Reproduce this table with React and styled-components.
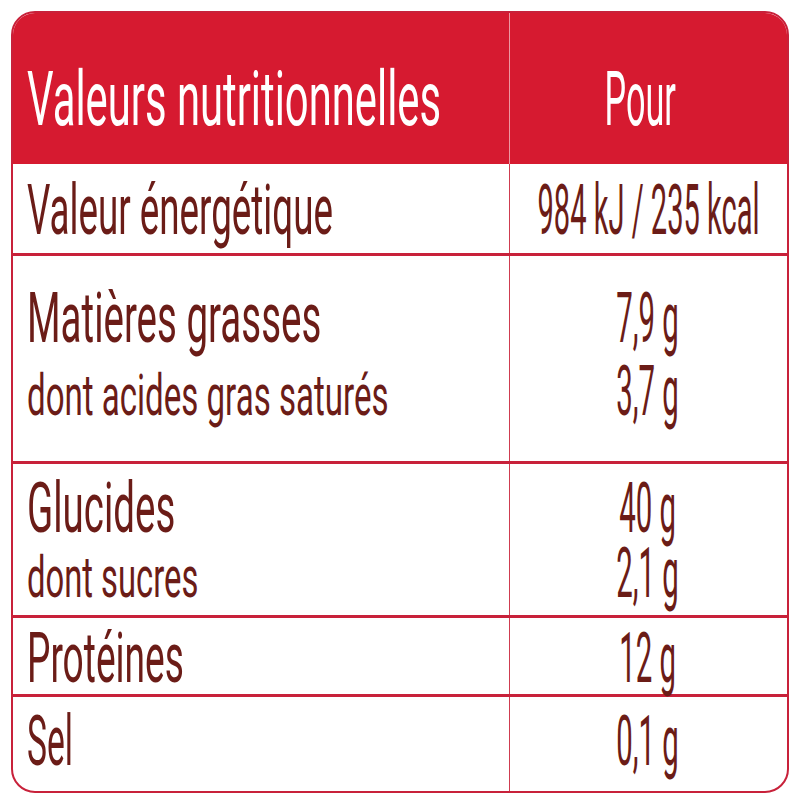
import React from "react";
import styled, { createGlobalStyle } from "styled-components";

const RED = "#d61a30";
const RULE = "#c8213a";
const BROWN = "#6b1c17";
const COL = 496;

const Global = createGlobalStyle`
  html, body {
    margin: 0;
    background: #ffffff;
  }
  body {
    font-family: Roboto, "Liberation Sans", Arial, sans-serif;
  }
`;

const Page = styled.div`
  width: 800px;
  height: 800px;
  box-sizing: border-box;
  padding: 11px;
`;

const Table = styled.div`
  width: 778px;
  height: 782px;
  box-sizing: border-box;
  border: 2px solid ${RULE};
  border-radius: 24px;
  overflow: hidden;
  display: grid;
  grid-template-rows: 151px 92px 208px 154px 79px 1fr;
`;

const Section = styled.div`
  box-sizing: border-box;
  display: flex;
  flex-direction: column;
  padding-top: ${(p) => p.$top}px;
  border-bottom: ${(p) => (p.$last ? "none" : `3px solid ${RULE}`)};
  background: linear-gradient(
    to right,
    transparent ${COL}px,
    #cf3c50 ${COL}px,
    #cf3c50 ${COL + 1}px,
    transparent ${COL + 1}px
  );
`;

const Head = styled(Section)`
  border-bottom: none;
  background: linear-gradient(
      to right,
      transparent ${COL}px,
      rgba(255, 255, 255, 0.55) ${COL}px,
      rgba(255, 255, 255, 0.55) ${COL + 1}px,
      transparent ${COL + 1}px
    ),
    ${RED};
  color: #ffffff;
`;

const Line = styled.div`
  display: grid;
  grid-template-columns: ${COL}px minmax(0, 1fr);
  align-items: baseline;
  margin-top: ${(p) => p.$gap || 0}px;
  color: ${(p) => (p.$light ? "#ffffff" : BROWN)};
`;

const Label = styled.div`
  display: flex;
  justify-content: flex-start;
  min-width: 0;
  padding-left: 14px;
  white-space: nowrap;
  font-size: ${(p) => p.$size}px;
  line-height: 1;
  font-weight: 400;
`;

const Value = styled.div`
  display: flex;
  justify-content: center;
  min-width: 0;
  padding-right: ${(p) => p.$pad || 0}px;
  white-space: nowrap;
  font-size: ${(p) => p.$size}px;
  line-height: 1;
  font-weight: 400;
`;

const Squeeze = styled.span`
  display: inline-block;
  flex-shrink: 0;
  transform: scaleX(${(p) => p.$x});
  transform-origin: ${(p) => (p.$center ? "center" : "left")} center;
`;

const rows = [
  {
    top: 11,
    lines: [{ label: "Valeur énergétique", value: "984 kJ / 235 kcal", lx: 0.525, vx: 0.415 }],
  },
  {
    top: 27,
    lines: [
      { label: "Matières grasses", value: "7,9 g", lx: 0.55, vx: 0.42 },
      { label: "dont acides gras saturés", value: "3,7 g", sub: true, gap: 3, lx: 0.57, vx: 0.42 },
    ],
  },
  {
    top: 9,
    lines: [
      { label: "Glucides", value: "40 g", lx: 0.55, vx: 0.42 },
      { label: "dont sucres", value: "2,1 g", sub: true, gap: -5, lx: 0.565, vx: 0.42 },
    ],
  },
  {
    top: 5,
    lines: [{ label: "Protéines", value: "12 g", lx: 0.53, vx: 0.42 }],
  },
  {
    top: 9,
    last: true,
    lines: [{ label: "Sel", value: "0,1 g", lx: 0.48, vx: 0.42 }],
  },
];

const App = () => {
  return (
    <>
      <Global />
      <Page>
        <Table>
          <Head $top={48}>
            <Line $light>
              <Label $size={76}>
                <Squeeze $x={0.55}>Valeurs nutritionnelles</Squeeze>
              </Label>
              <Value $size={76} $pad={16}>
                <Squeeze $x={0.45} $center>Pour</Squeeze>
              </Value>
            </Line>
          </Head>
          {rows.map((row, i) => (
            <Section key={i} $top={row.top} $last={row.last}>
              {row.lines.map((l) => (
                <Line key={l.label} $gap={l.gap}>
                  <Label $size={l.sub ? 58 : 70}>
                    <Squeeze $x={l.lx}>{l.label}</Squeeze>
                  </Label>
                  <Value $size={70}>
                    <Squeeze $x={l.vx} $center>{l.value}</Squeeze>
                  </Value>
                </Line>
              ))}
            </Section>
          ))}
        </Table>
      </Page>
    </>
  );
};

export default App;
